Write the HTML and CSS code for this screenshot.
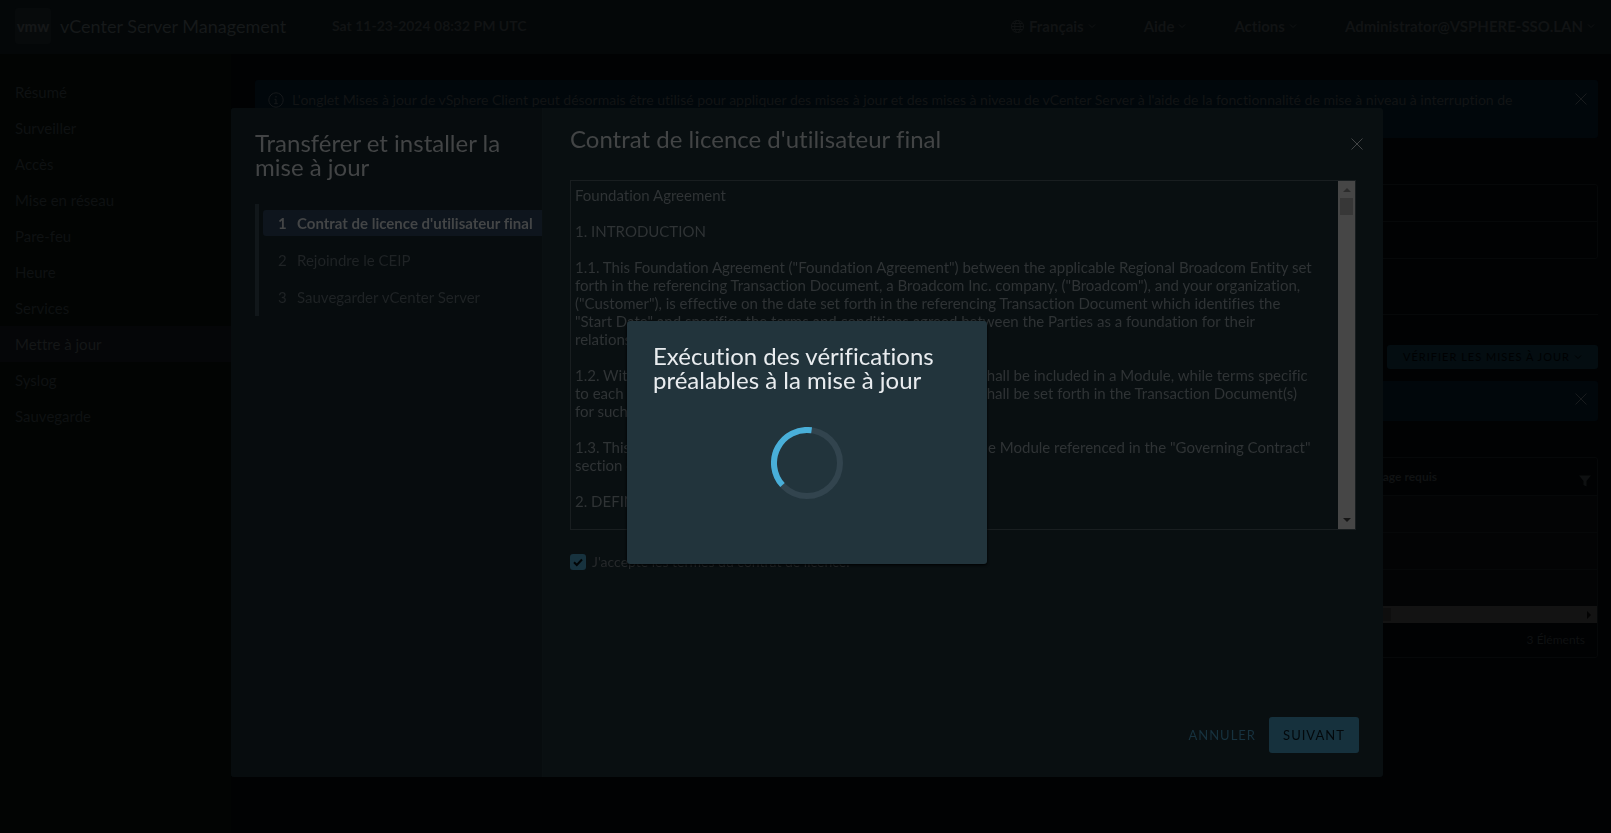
FILE: index.html
```html
<!DOCTYPE html>
<html lang="fr">
<head>
<meta charset="utf-8">
<title>vCenter Server Management</title>
<link rel="stylesheet" href="styles.css">
</head>
<body>
<div class="app">
  <header class="header">
    <span class="logo">vmw</span>
    <span class="brand">vCenter Server Management</span>
    <time class="clock">Sat 11-23-2024 08:32 PM UTC</time>
    <nav class="header-menus">
      <button class="menu menu-lang" type="button">
        <svg class="globe" viewBox="0 0 16 16"><circle cx="8" cy="8" r="6.5"/><ellipse cx="8" cy="8" rx="3" ry="6.5"/><path d="M1.5 8h13M2.5 4.8h11M2.5 11.2h11"/></svg>
        Français <svg class="caret" viewBox="0 0 8 8"><path d="M1 2.5l3 3 3-3"/></svg>
      </button>
      <button class="menu" type="button">Aide <svg class="caret" viewBox="0 0 8 8"><path d="M1 2.5l3 3 3-3"/></svg></button>
      <button class="menu" type="button">Actions <svg class="caret" viewBox="0 0 8 8"><path d="M1 2.5l3 3 3-3"/></svg></button>
      <button class="menu" type="button">Administrator@VSPHERE-SSO.LAN <svg class="caret" viewBox="0 0 8 8"><path d="M1 2.5l3 3 3-3"/></svg></button>
    </nav>
  </header>
  <div class="body">
    <nav class="sidenav">
      <a href="#">Résumé</a>
      <a href="#">Surveiller</a>
      <a href="#">Accès</a>
      <a href="#">Mise en réseau</a>
      <a href="#">Pare-feu</a>
      <a href="#">Heure</a>
      <a href="#">Services</a>
      <a href="#" class="active">Mettre à jour</a>
      <a href="#">Syslog</a>
      <a href="#">Sauvegarde</a>
    </nav>
    <main class="content">
      <div class="alert alert-top">
        <svg class="info" viewBox="0 0 16 16"><circle cx="8" cy="8" r="7.2"/><path d="M8 4v1.6M6.5 7.3H8v4.4M6.2 11.7h3.6"/></svg>
        <p>L'onglet Mises à jour de vSphere Client peut désormais être utilisé pour appliquer des mises à jour et des mises à niveau de vCenter Server à l'aide de la fonctionnalité de mise à niveau à interruption de</p>
        <button class="close" type="button" aria-label="Fermer"><svg viewBox="0 0 12 12"><path d="M0.500 0.500l11 11M11.500 0.500l-11 11"/></svg></button>
      </div>
      <div class="summary"><div></div><div></div></div>
      <div class="toolbar">
        <button class="check-updates" type="button">VÉRIFIER LES MISES À JOUR <svg class="caret" viewBox="0 0 8 8"><path d="M1 2.500l3 3 3-3"/></svg></button>
      </div>
      <div class="alert alert-small">
        <p></p>
        <button class="close" type="button" aria-label="Fermer"><svg viewBox="0 0 12 12"><path d="M0.500 0.500l11 11M11.500 0.500l-11 11"/></svg></button>
      </div>
      <section class="grid">
        <div class="grid-head">
          <span>Redémarrage requis</span>
          <svg class="filter" viewBox="0 0 12 12"><path d="M0 0.500h12L7.500 6v5.500l-3-1.500V6z"/></svg>
        </div>
        <div class="grid-row"></div>
        <div class="grid-row"></div>
        <div class="grid-row"></div>
        <div class="grid-scroll"><span></span><svg viewBox="0 0 4 8"><path d="M0 0l4 4-4 4z"/></svg></div>
        <div class="grid-foot">3 Éléments</div>
      </section>
    </main>
  </div>
</div>

<div class="overlay">
  <section class="wizard" role="dialog" aria-labelledby="wizard-title">
    <aside class="steps">
      <h1 id="wizard-title">Transférer et installer la mise à jour</h1>
      <ol>
        <li class="current"><b>1</b>Contrat de licence d'utilisateur final</li>
        <li><b>2</b>Rejoindre le CEIP</li>
        <li><b>3</b>Sauvegarder vCenter Server</li>
      </ol>
    </aside>
    <div class="page">
      <div class="page-head">
        <h2>Contrat de licence d'utilisateur final</h2>
        <button class="close close-wizard" type="button" aria-label="Fermer"><svg viewBox="0 0 12 12"><path d="M0.500 0.500l11 11M11.500 0.500l-11 11"/></svg></button>
      </div>
      <div class="terms">
        <textarea readonly aria-label="Contrat de licence">Foundation Agreement

1. INTRODUCTION

1.1. This Foundation Agreement ("Foundation Agreement") between the applicable Regional Broadcom Entity set
forth in the referencing Transaction Document, a Broadcom Inc. company, ("Broadcom"), and your organization,
("Customer"), is effective on the date set forth in the referencing Transaction Document which identifies the
"Start Date" and specifies the terms and conditions agreed between the Parties as a foundation for their
relationship.

1.2. Within this Agreement, all terms specific to each offering shall be included in a Module, while terms specific
to each single transaction (or to a specific Broadcom offering) shall be set forth in the Transaction Document(s)
for such transaction.

1.3. This Foundation Agreement also incorporates the applicable Module referenced in the "Governing Contract"
section of the Transaction Document.

2. DEFINITIONS</textarea>
        <div class="scrollbar">
          <svg class="up" viewBox="0 0 8 4"><path d="M0 4l4-4 4 4z"/></svg>
          <span></span>
          <svg class="down" viewBox="0 0 8 4"><path d="M0 0l4 4 4-4z"/></svg>
        </div>
      </div>
      <label class="accept"><input type="checkbox" checked><svg class="tick" viewBox="0 0 16 16"><path d="M4 8.200l2.800 2.800L12 5.500"/></svg><span>J'accepte les termes du contrat de licence.</span></label>
      <footer class="actions">
        <button class="cancel" type="button">ANNULER</button>
        <button class="next" type="button">SUIVANT</button>
      </footer>
    </div>
  </section>
</div>

<div class="overlay">
  <section class="progress" role="alertdialog" aria-labelledby="progress-title">
    <h2 id="progress-title">Exécution des vérifications préalables à la mise à jour</h2>
    <svg class="spinner" viewBox="0 0 72 72"><circle class="track" cx="36" cy="36" r="33"/><path class="arc" d="M11.500 58.100A33 33 0 0 1 40.600 3.300"/></svg>
  </section>
</div>
</body>
</html>
```
FILE: styles.css
```css
* { box-sizing: border-box; }
html, body { height: 100%; margin: 0; }
body {
  background: #010203;
  color: #101213;
  font-family: "Lato", "Open Sans", sans-serif;
  font-size: 15px;
  line-height: 18px;
  font-variant-ligatures: none;
  overflow: hidden;
}
h1, h2, p, ol { margin: 0; padding: 0; font-weight: 400; }
button, textarea { font: inherit; font-variant-ligatures: none; }
button { color: inherit; letter-spacing: inherit; background: none; border: 0; padding: 0; }
svg { display: block; fill: none; stroke: currentColor; }

.app { display: flex; flex-direction: column; height: 100%; }

.header { display: flex; flex: none; align-items: center; height: 54px; padding: 0 16px 2px 15px; background: #040708; color: #111314; }
.logo { display: grid; place-items: center; width: 36px; height: 36px; border-radius: 3px; background: #070a0b; color: #151718; font-weight: 900; font-size: 15px; }
.brand { margin-left: 9px; font-size: 18px; width: 272px; color: #16191a; }
.clock { font-weight: 700; font-size: 14px; }
.header-menus { display: flex; gap: 48px; margin-left: auto; }
.menu { display: flex; align-items: center; gap: 4px; font-weight: 700; font-size: 15px; }
.caret { width: 8px; height: 8px; }
.globe { width: 15px; height: 15px; }

.body { display: flex; flex: 1; min-height: 0; }
.sidenav { flex: none; width: 231px; padding-top: 20px; background: #020403; }
.sidenav a { display: block; padding: 9px 15px; color: #0e1112; text-decoration: none; }
.sidenav a.active { background: #050608; color: #141617; }

.content { flex: 1; min-width: 0; padding: 26px 13px 0 24px; }
.alert { display: flex; align-items: flex-start; border-radius: 3px; background: #01070b; color: #121415; font-size: 14px; }
.alert p { flex: 1; min-width: 0; padding-left: 8px; white-space: nowrap; }
.alert-top { height: 58px; padding: 11px 11px 0 13px; }
.info { width: 16px; height: 16px; margin-top: 1px; color: #16191b; }
.close svg { width: 12px; height: 12px; }
.alert .close { padding-top: 2px; color: #181b1d; }
.alert-small { height: 40px; margin-top: 12px; padding: 10px 11px 0 13px; }
.summary { margin-top: 46px; border: 1px solid #060809; border-radius: 3px; }
.summary div { height: 36px; }
.summary div + div { border-top: 1px solid #060809; height: 37px; }
.toolbar { display: flex; justify-content: flex-end; margin-top: 55px; padding-top: 30px; border-top: 1px solid #060809; }
.check-updates { display: flex; align-items: center; justify-content: center; gap: 4px; width: 211px; height: 24px; border-radius: 3px; background: #040d11; color: #000102; font-size: 11px; letter-spacing: 1px; }
.grid { margin-top: 36px; border: 1px solid #060809; border-radius: 3px; }
.grid-head { display: flex; align-items: center; justify-content: flex-end; gap: 142px; height: 37px; padding: 0 6px; font-size: 12px; font-weight: 700; }
.filter { width: 12px; height: 12px; margin-top: 8px; fill: #0e1011; stroke: none; }
.grid-row { height: 37px; border-top: 1px solid #060809; background: #030405; }
.grid-scroll { display: flex; align-items: center; justify-content: space-between; height: 17px; padding-right: 6px; background: #131313; }
.grid-scroll span { width: 1135px; height: 13px; background: #0e0e0e; }
.grid-scroll svg { width: 4px; height: 8px; fill: #030303; stroke: none; }
.grid-foot { padding: 8px 12px; text-align: right; font-size: 12px; color: #0f1112; }

.overlay { position: fixed; inset: 0; display: flex; align-items: center; justify-content: center; padding: 108px 0 56px 3px; }

.wizard { display: flex; width: 1152px; max-width: 100%; height: 100%; border-radius: 3px; background: #090f11; overflow: hidden; }
.steps { flex: none; width: 312px; padding: 23px 0 0 24px; background: #070c0e; border-right: 1px solid #0a1012; }
.steps h1 { padding-right: 24px; font-size: 24px; line-height: 24px; color: #424445; }
.steps ol { display: grid; gap: 11px; margin-top: 25px; padding: 6px 0 6px 4px; border-left: 4px solid #11171a; list-style: none; }
.steps li { display: flex; align-items: center; height: 26px; padding-left: 15px; border-radius: 3px 0 0 3px; color: #1f2325; white-space: nowrap; }
.steps b { width: 19px; font-weight: inherit; }
.steps .current { background: #0e151d; color: #434546; font-weight: 700; }

.page { flex: 1; display: flex; flex-direction: column; padding: 19px 24px 24px 27px; min-width: 0; }
.page-head { display: flex; justify-content: space-between; height: 53px; }
.page h2 { font-size: 24px; line-height: 24px; color: #424445; }
.close-wizard { align-self: flex-start; padding: 11px 0 0; margin-right: -4px; color: #424445; }
.terms { display: flex; height: 350px; margin-right: 3px; border: 1px solid #191e20; }
.terms textarea { flex: 1; min-width: 0; padding: 5px 4px; border: 0; outline: 0; resize: none; overflow: hidden; background: none; color: #2f3335; white-space: pre; }
.scrollbar { display: flex; flex-direction: column; align-items: center; width: 17px; padding: 7px 0; background: #464646; }
.scrollbar svg { width: 8px; height: 4px; stroke: none; }
.scrollbar span { width: 13px; height: 17px; margin-top: 6px; background: #373737; }
.scrollbar .up { fill: #2c2c2c; }
.scrollbar .down { margin-top: auto; fill: #161616; }
.accept { display: grid; grid-template-columns: 16px auto; align-items: center; justify-content: start; column-gap: 6px; margin-top: 23px; font-size: 14px; color: #26292b; }
.accept input { grid-area: 1 / 1; appearance: none; width: 16px; height: 16px; margin: 0; border-radius: 3px; background: #17323e; }
.tick { grid-area: 1 / 1; width: 16px; height: 16px; color: #020506; stroke-width: 2; }
.actions { display: flex; justify-content: flex-end; gap: 13px; margin-top: auto; font-size: 13px; letter-spacing: 1px; }
.cancel { color: #17323f; }
.next { width: 90px; height: 36px; border-radius: 3px; background: #16313d; color: #03080b; }

.progress { display: flex; flex-direction: column; align-items: center; width: 360px; height: 243px; padding: 23px 24px; border-radius: 3px; background: #22343c; color: #e9ecef; box-shadow: 0 1px 3px #000; }
.progress h2 { align-self: stretch; padding: 0 24px 0 2px; font-size: 24px; line-height: 24px; }
.spinner { width: 72px; height: 72px; margin-top: 35px; stroke-width: 6; }
.track { stroke: #32444e; }
.arc { stroke: #49afd9; }
```
